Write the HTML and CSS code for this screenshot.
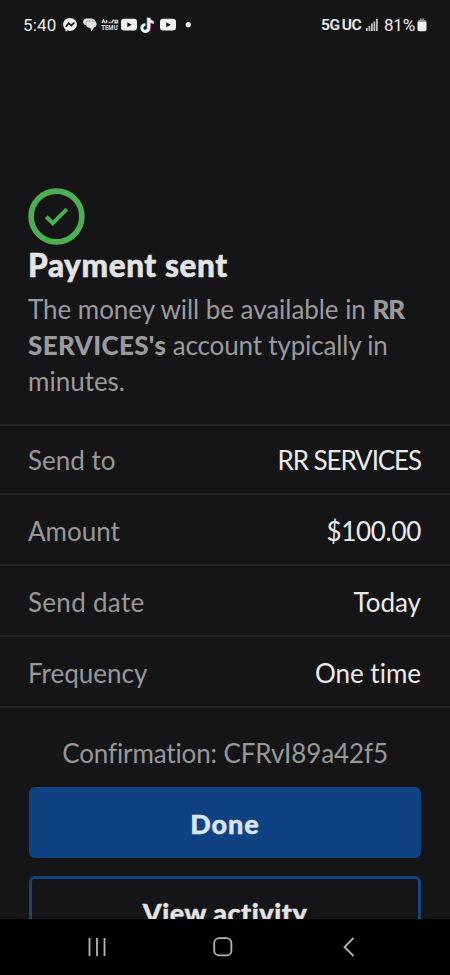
FILE: index.html
```html
<!DOCTYPE html>
<html lang="en">
<head>
<meta charset="utf-8">
<title>Payment sent</title>
<link rel="stylesheet" href="styles.css">
</head>
<body>
<div class="screen">
  <header class="status">
    <span class="clock">5:40</span>
    <svg class="notifications" width="136" height="20" viewBox="0 0 136 20">
      <path fill="#f0f0f0" d="M8 3C4 3 1.200 5.800 1.200 9.500c0 2 .9 3.700 2.300 4.900v2.300l2.200-1.100c.7.2 1.500.3 2.300.3 4 0 6.900-2.800 6.900-6.400S12 3 8 3z"/>
      <path fill="none" stroke="#151517" stroke-width="1.700" d="M3.800 11.700l2.900-3.400 2.600 2.200 3-3"/>
      <path fill="#e4e4e4" d="M24.500 3.500h4.500c2.300 0 3.800 1 4.400 2.700.8.800 1.200 1.700 1.200 2.700 0 1.700-.9 3-2.400 3.600l-3 4-.8-3.500c-2 0-3.800-.9-4.400-2.700-1.800-.4-2.900-1.500-2.900-3.200 0-2 1.300-3.600 3.400-3.600z"/>
      <path fill="none" stroke="#88888a" stroke-width=".7" d="M24 10V7.500c0-1 .6-1.500 1.600-1.500h7.600"/>
      <path fill="none" stroke="#d0d0d0" stroke-width="1.500" d="M40 8.200l1.500-3 1.500 3M44.500 5v3.200M46.500 7.500h2M49.500 8.200l2-3.500M53 5.500h2.500v2.200H53z"/>
      <text class="temu" x="39.200" y="15" textLength="16.500" lengthAdjust="spacingAndGlyphs">TEMU</text>
      <rect x="59" y="3.800" width="16" height="11.700" rx="3" fill="#f0f0f0"/>
      <path fill="#151517" d="M65.300 7.200v5l4.500-2.500z"/>
      <g fill="none" stroke-width="2.600">
        <path stroke="#58d5d3" d="M86 2.500v10.200a3.200 3.200 0 1 1-3.200-3.200"/>
        <path stroke="#e84868" d="M87.600 3.500v10.200a3.200 3.200 0 0 1-4.500 2.500M87.600 4.500c.5 2 2 3.200 4.300 3.400"/>
        <path stroke="#f5f5f5" d="M86.800 3v10.200a3.400 3.400 0 1 1-3.400-3.400M86.800 3c.3 2.500 2 4 4.700 4.200"/>
      </g>
      <rect x="98" y="3.800" width="16" height="11.700" rx="3" fill="#f0f0f0"/>
      <path fill="#151517" d="M104.300 7.200v5l4.500-2.500z"/>
      <circle cx="126.300" cy="9.700" r="2.600" fill="#f0f0f0"/>
    </svg>
    <span class="network">5G<span class="uc">UC</span></span>
    <svg class="signal" width="12" height="14" viewBox="0 0 12 14">
      <path fill="#bdbdbd" d="M0 10h1.800v3H0zM2.500 8h1.800v5H2.500zM5 5.500h1.800V13H5zM7.500 3.500h1.800V13H7.500zM10 1h1.800v12H10z"/>
    </svg>
    <span class="percent">81%</span>
    <svg class="battery" width="10" height="14" viewBox="0 0 10 14">
      <path fill="#8c8c8e" d="M3 .5h4V2h.8C9 2 9.500 2.700 9.500 4H.5C.5 2.700 1 2 2.200 2H3z"/>
      <path fill="#f2f2f2" d="M.5 3.800h9v7.400c0 1.300-.6 2-1.800 2H2.300c-1.200 0-1.800-.7-1.800-2z"/>
    </svg>
  </header>

  <main class="content">
    <section class="summary">
      <svg class="success" width="57" height="57" viewBox="0 0 57 57">
        <circle cx="28.500" cy="28.500" r="25.400" fill="none" stroke="#4caf50" stroke-width="5.600"/>
        <path d="M18.300 28.800l6.500 6.300 14-14" fill="none" stroke="#4caf50" stroke-width="4"/>
      </svg>
      <h1 class="title">Payment sent</h1>
      <p class="message">
        <span class="line line-a">The money will be available in <b>RR</b></span>
        <span class="line line-b"><b>SERVICES's</b> account typically in</span>
        <span class="line">minutes.</span>
      </p>
    </section>

    <dl class="details">
      <div class="row"><dt>Send to</dt><dd class="payee">RR SERVICES</dd></div>
      <div class="row"><dt>Amount</dt><dd class="amount">$100.00</dd></div>
      <div class="row"><dt class="send-date">Send date</dt><dd>Today</dd></div>
      <div class="row"><dt>Frequency</dt><dd>One time</dd></div>
    </dl>

    <p class="confirmation">Confirmation: CFRvI89a42f5</p>
    <div class="actions">
      <button class="button primary">Done</button>
      <button class="button outline">View activity</button>
    </div>
  </main>

  <nav class="navbar">
    <svg width="20" height="20" viewBox="0 0 20 20"><path d="M2.500 1v18M10 1v18M17.500 1v18"/></svg>
    <svg width="20" height="20" viewBox="0 0 20 20"><rect x="1.200" y="1.200" width="17.200" height="17.200" rx="5"/></svg>
    <svg width="20" height="20" viewBox="0 0 20 20"><path d="M14.500 1L5.500 10l9 9"/></svg>
  </nav>
</div>
</body>
</html>
```

FILE: styles.css
```css
* { box-sizing: border-box; }

body {
  margin: 0;
  background: #151517;
  font-family: Lato, "Liberation Sans", sans-serif;
  font-variant-ligatures: none;
}

.screen {
  width: 450px;
  height: 975px;
  display: flex;
  flex-direction: column;
  overflow: hidden;
}

.status {
  flex: none;
  height: 49px;
  padding-left: 23px;
  display: flex;
  align-items: center;
  color: #ededed;
  font-family: Roboto, sans-serif;
  font-size: 17px;
  line-height: 20px;
}
.clock { width: 39px; letter-spacing: .2px; }
.notifications { margin-top: 1px; }
.temu { font: 900 6.500px Roboto, sans-serif; fill: #d0d0d0; }
.network { width: 45px; margin-left: 123px; font-size: 15.500px; font-weight: 500; letter-spacing: -.3px; white-space: nowrap; -webkit-text-stroke: .2px; }
.uc { margin-left: 2px; }
.percent { width: 33px; margin-left: 6px; letter-spacing: -.2px; }

.content {
  flex: 1;
  min-height: 0;
  overflow: hidden;
  padding-top: 139px;
}

.summary { height: 236px; padding-left: 28px; }
.success { display: block; }
.title {
  margin: 0;
  height: 46px;
  padding-top: 2px;
  font-size: 31.500px;
  font-weight: 900;
  line-height: 36px;
  letter-spacing: .6px;
  color: #e4e4e6;
  -webkit-text-stroke: .5px;
}
.message {
  margin: 0;
  font-size: 26px;
  line-height: 36px;
  color: #9b9b9d;
}
.line { display: block; width: max-content; white-space: nowrap; }
.message b { font-weight: 900; }
.line-a { letter-spacing: -.05px; }
.line-a b { letter-spacing: -1px; }
.line-b { letter-spacing: -.16px; }
.line-b b { letter-spacing: .35px; }

.details {
  margin: 0;
  border-top: 2px solid #242427;
}
.row {
  height: 71px;
  padding: 1px 29px 0 28px;
  display: flex;
  align-items: center;
  justify-content: space-between;
  border-bottom: 2px solid #242427;
  font-size: 26px;
  line-height: 36px;
  color: #98989a;
}
.row:first-child { height: 69px; }
.row + .row { padding-top: 2px; }
.row dd { margin: 0; color: #ebebed; }
.row .payee { letter-spacing: -1.100px; }
.row .amount { letter-spacing: -.3px; }
.send-date { letter-spacing: .3px; }

.confirmation {
  margin: 0;
  height: 79px;
  padding-top: 27px;
  text-align: center;
  font-size: 26px;
  line-height: 36px;
  letter-spacing: -.12px;
  color: #98989a;
}

.actions {
  padding: 0 29px;
  display: flex;
  flex-direction: column;
  gap: 18px;
}
.button {
  height: 71px;
  padding: 2px 0 0;
  border: 0;
  border-radius: 6px;
  font: 900 27px/36px Lato, "Liberation Sans", sans-serif;
  letter-spacing: .9px;
  -webkit-text-stroke: .4px;
}
.primary { background: #0f4283; color: #dce5f5; }
.outline { background: transparent; border: 3px solid #17437f; color: #e4e4e6; letter-spacing: .5px; }

.navbar {
  flex: none;
  height: 56px;
  padding: 0 91px 0 87px;
  display: flex;
  align-items: center;
  justify-content: space-between;
  background: #000;
}
.navbar svg { fill: none; stroke: #b5b5b5; stroke-width: 1.800; }
```
